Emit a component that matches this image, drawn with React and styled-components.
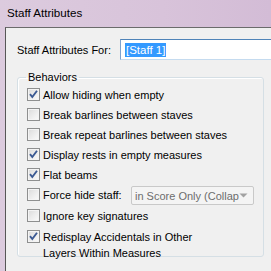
import React from 'react'
import styled, {createGlobalStyle} from 'styled-components'

const GlobalStyle = createGlobalStyle`
  html, body {
    margin: 0;
    padding: 0;
    background: #d9c7db;
  }
  body {
    font-family: "Segoe UI", "Liberation Sans", Arial, sans-serif;
    font-size: 11px;
    color: #000;
  }
`

const behaviors = [
  {label: 'Allow hiding when empty', checked: true},
  {label: 'Break barlines between staves', checked: false},
  {label: 'Break repeat barlines between staves', checked: false},
  {label: 'Display rests in empty measures', checked: true},
  {label: 'Flat beams', checked: true},
  {label: 'Force hide staff:', checked: false, combo: 'in Score Only (Collap', h: 21},
  {label: 'Ignore key signatures', checked: false, h: 21},
  {label: ['Redisplay Accidentals in Other', 'Layers Within Measures'], checked: true},
]

export default function App() {
  return (
    <Window>
      <GlobalStyle/>
      <TitleBar>Staff Attributes</TitleBar>
      <Client>
        <ForRow>
          <ForLabel>Staff Attributes For:</ForLabel>
          <TextBox>
            <Selected>[Staff 1]</Selected>
          </TextBox>
        </ForRow>
        <GroupBox>
          <Legend>Behaviors</Legend>
          {behaviors.map((b, i) => (
            <CheckRow key={i} $h={b.h}>
              <CheckBox checked={b.checked}/>
              {Array.isArray(b.label) ?
                (<MultiLabel>{b.label.map(l => <div key={l}>{l}</div>)}</MultiLabel>) :
                (<RowLabel $fixed={!!b.combo}>{b.label}</RowLabel>)
              }
              {b.combo && <Combo text={b.combo}/>}
            </CheckRow>
          ))}
        </GroupBox>
      </Client>
    </Window>
  )
}

const CheckBox = ({checked}) => (
  <Box>
    {checked &&
      <svg width="11" height="11" viewBox="0 0 11 11">
        <path d="M2 5.2 L4.3 8 L9 1.8" fill="none" stroke="#3c5a93" strokeWidth="1.9" strokeLinejoin="miter"/>
      </svg>
    }
  </Box>
)

const Combo = ({text}) => (
  <ComboBox>
    <ComboText>{text}</ComboText>
    <svg width="9" height="5" viewBox="0 0 9 5">
      <path d="M0.5 0.5 L8.5 0.5 L4.5 4.5 Z" fill="#a2a2a2"/>
    </svg>
  </ComboBox>
)

const Window = styled.div`
  width: 271px;
  height: 271px;
  overflow: hidden;
  display: flex;
  flex-direction: column;
  background: linear-gradient(90deg, #dccbde 0%, #d8c3da 60%, #d3bcd6 100%);
`

const TitleBar = styled.div`
  height: 27px;
  flex: none;
  padding-left: 7px;
  line-height: 26px;
  font-size: 11.6px;
  color: #000;
`

const Client = styled.div`
  flex: 1;
  margin-left: 5px;
  background: #f0f0f0;
  border-left: 1px solid #575757;
  border-top: 1px solid #6b6b6b;
  padding: 11px 0 0 11px;
  overflow: hidden;
`

const ForRow = styled.div`
  display: flex;
  align-items: center;
  height: 21px;
  white-space: nowrap;
`

const ForLabel = styled.span`
  width: 103px;
  flex: none;
  padding-top: 1px;
`

const TextBox = styled.div`
  flex: none;
  width: 200px;
  height: 19px;
  background: #fff;
  border: 1px solid #7da2ce;
  border-top-color: #4f83b8;
  border-bottom-color: #c5dbef;
  display: flex;
  align-items: center;
  padding-left: 4px;
`

const Selected = styled.span`
  background: #3399ff;
  color: #fff;
  line-height: 14px;
  font-size: 11.5px;
  padding: 0 1px;
`

const GroupBox = styled.fieldset`
  margin: 10px 0 0 0;
  width: 247px;
  box-sizing: border-box;
  height: 187px;
  padding: 0 0 0 9px;
  border: 1px solid #d5dfe5;
  border-radius: 3px;
  box-shadow: inset 1px 1px 0 #fff;
`

const Legend = styled.legend`
  padding: 0 2px;
  margin-left: -1px;
  line-height: 14px;
`

const CheckRow = styled.div`
  display: flex;
  align-items: flex-start;
  height: ${p => p.$h || 20}px;
  padding-top: 3px;
  box-sizing: border-box;
  white-space: nowrap;
  &:first-of-type {
    margin-top: 1px;
  }
`

const Box = styled.span`
  flex: none;
  width: 11px;
  height: 11px;
  border: 1px solid #8e8f8f;
  background: linear-gradient(135deg, #dadada 0%, #ececec 50%, #fbfbfb 100%);
  box-shadow: inset 0 0 0 1px #f4f4f4;
  margin-right: 3px;
  display: flex;
  align-items: center;
  justify-content: center;
`

const RowLabel = styled.span`
  line-height: 14px;
  ${p => p.$fixed && 'width: 88px; flex: none;'}
`

const MultiLabel = styled.div`
  line-height: 16px;
  margin-top: -1px;
`

const ComboBox = styled.div`
  flex: none;
  margin-top: -2px;
  width: 113px;
  height: 17px;
  border: 1px solid #c9c9c9;
  border-radius: 2px;
  background: #f4f4f4;
  display: flex;
  align-items: center;
  justify-content: space-between;
  padding: 0 5px 0 3px;
  box-sizing: content-box;
  overflow: hidden;
`

const ComboText = styled.span`
  color: #6d6d6d;
  white-space: nowrap;
  overflow: hidden;
`
